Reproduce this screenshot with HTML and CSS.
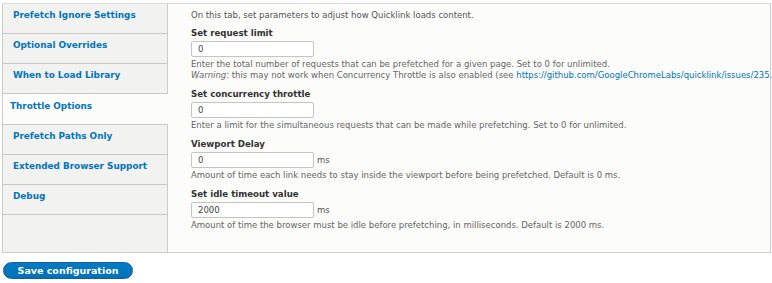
FILE: index.html
```html
<!DOCTYPE html>
<html>
<head>
<meta charset="utf-8">
<link rel="stylesheet" href="styles.css">
</head>
<body>
<form class="page">
  <div class="vtabs">
    <ul class="menu">
      <li class="tab"><a href="#">Prefetch Ignore Settings</a></li>
      <li class="tab"><a href="#">Optional Overrides</a></li>
      <li class="tab"><a href="#">When to Load Library</a></li>
      <li class="tab active"><a href="#">Throttle Options</a></li>
      <li class="tab"><a href="#">Prefetch Paths Only</a></li>
      <li class="tab"><a href="#">Extended Browser Support</a></li>
      <li class="tab"><a href="#">Debug</a></li>
    </ul>
    <div class="pane">
      <p class="intro">On this tab, set parameters to adjust how Quicklink loads content.</p>
      <div class="field">
        <label class="label">Set request limit</label>
        <div class="row"><input class="text" type="text" value="0"></div>
        <div class="desc">Enter the total number of requests that can be prefetched for a given page. Set to 0 for unlimited.<br><em>Warning</em>: this may not work when Concurrency Throttle is also enabled (see <a href="#">https://github.com/GoogleChromeLabs/quicklink/issues/235</a>.</div>
      </div>
      <div class="field">
        <label class="label">Set concurrency throttle</label>
        <div class="row"><input class="text" type="text" value="0"></div>
        <div class="desc">Enter a limit for the simultaneous requests that can be made while prefetching. Set to 0 for unlimited.</div>
      </div>
      <div class="field">
        <label class="label">Viewport Delay</label>
        <div class="row"><input class="text" type="text" value="0"><span class="suffix">ms</span></div>
        <div class="desc">Amount of time each link needs to stay inside the viewport before being prefetched. Default is 0 ms.</div>
      </div>
      <div class="field">
        <label class="label">Set idle timeout value</label>
        <div class="row"><input class="text" type="text" value="2000"><span class="suffix">ms</span></div>
        <div class="desc">Amount of time the browser must be idle before prefetching, in milliseconds. Default is 2000 ms.</div>
      </div>
    </div>
  </div>
  <div class="actions">
    <button class="button" type="button">Save configuration</button>
  </div>
</form>
</body>
</html>
```
FILE: styles.css
```css
html, body {
  margin: 0;
  padding: 0;
  background: #ffffff;
}
body {
  font-family: "DejaVu Sans", Verdana, sans-serif;
  font-size: 8.5px;
  color: #333;
}
.page {
  padding: 3px 1px 0 2px;
}
.vtabs {
  display: flex;
  height: 248px;
  border: 1px solid #ccc;
  border-top-color: #dcdcda;
  background: #fcfcfa;
}
.menu {
  list-style: none;
  margin: 0;
  padding: 0;
  width: 164px;
  flex: none;
  background: #f2f2f0;
  border-right: 1px solid #ccc;
}
.tab {
  height: 29px;
  border-bottom: 1px solid #c8c8c6;
  padding: 0 0 0 10px;
}
.tab a {
  display: block;
  padding-top: 6px;
  line-height: 11px;
  color: #0074bd;
  font-weight: bold;
  font-size: 8.85px;
  text-decoration: none;
}
.tab.active {
  background: #fcfcfa;
  margin-right: -1px;
  padding-left: 7px;
  height: 30px;
}
.tab.active a {
  padding-top: 7px;
}
.pane {
  flex: 1;
  padding: 6px 0 0 23px;
  white-space: nowrap;
}
.intro {
  margin: 0 0 7px;
  color: #555;
  line-height: 11px;
}
.field {
  margin-bottom: 8px;
}
.label {
  display: block;
  font-weight: bold;
  font-size: 8.65px;
  color: #333;
  line-height: 11px;
  margin-bottom: 2px;
}
.row {
  display: flex;
  align-items: center;
  height: 16px;
}
.text {
  box-sizing: border-box;
  width: 123px;
  height: 16px;
  margin: 0;
  border: 1px solid #c4c4c2;
  border-radius: 2px;
  background: #fff;
  padding: 0 6px;
  font-family: "DejaVu Sans", Verdana, sans-serif;
  font-size: 8.5px;
  color: #444;
}
.suffix {
  margin-left: 3px;
  color: #555;
}
.desc {
  color: #666;
  line-height: 11px;
  margin-top: 2px;
}
.desc a {
  color: #0074bd;
  text-decoration: none;
}
.actions {
  padding: 9px 0 0 1px;
}
.button {
  height: 17px;
  width: 130px;
  border: 1px solid #1e5c90;
  border-radius: 10px;
  background: linear-gradient(#007bc6, #0071b8);
  color: #fff;
  font-family: "DejaVu Sans", Verdana, sans-serif;
  font-weight: bold;
  font-size: 9.5px;
  padding: 0;
}
```
